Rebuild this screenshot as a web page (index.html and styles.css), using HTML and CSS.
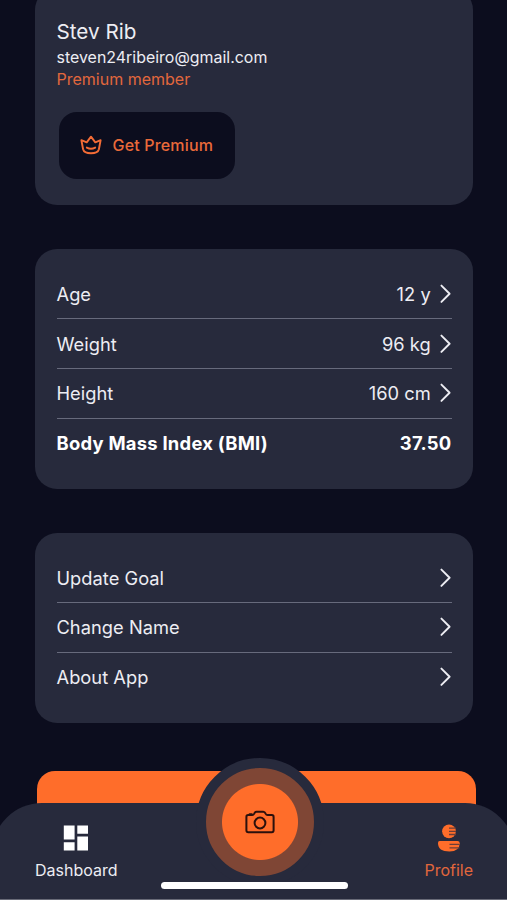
FILE: index.html
```html
<!DOCTYPE html>
<html lang="en">
<head>
<meta charset="utf-8">
<title>Profile</title>
<link rel="stylesheet" href="styles.css">
</head>
<body>
<div class="screen">
  <main class="content">
    <section class="card account">
      <h1 class="name"><span>Stev Rib</span></h1>
      <p class="email"><span>steven24ribeiro@gmail.com</span></p>
      <p class="member"><span>Premium member</span></p>
      <button class="premium">
        <svg class="crown" viewBox="0 0 22 20"><path d="M1.4 5.2L6.7 7.3L11 1.7L15.3 7.3L20.6 5.2L18.9 14.2Q17.9 18.2 11 18.2T3.1 14.2Z"/><path d="M6.8 12.6Q11 14.8 15.2 12.6"/></svg>
        <span>Get Premium</span>
      </button>
    </section>
    <section class="card list stats">
      <div class="row"><span>Age</span><span class="value">12 y</span><svg class="chevron" viewBox="0 0 12 20"><path d="M1.5 1.5L10 10L1.5 18.5"/></svg></div>
      <div class="row"><span>Weight</span><span class="value">96 kg</span><svg class="chevron" viewBox="0 0 12 20"><path d="M1.5 1.5L10 10L1.5 18.5"/></svg></div>
      <div class="row"><span>Height</span><span class="value">160 cm</span><svg class="chevron" viewBox="0 0 12 20"><path d="M1.5 1.5L10 10L1.5 18.5"/></svg></div>
      <div class="row total"><span>Body Mass Index (BMI)</span><span class="value">37.50</span></div>
    </section>
    <section class="card list actions">
      <div class="row"><span>Update Goal</span><svg class="chevron" viewBox="0 0 12 20"><path d="M1.5 1.5L10 10L1.5 18.5"/></svg></div>
      <div class="row"><span>Change Name</span><svg class="chevron" viewBox="0 0 12 20"><path d="M1.5 1.5L10 10L1.5 18.5"/></svg></div>
      <div class="row"><span>About App</span><svg class="chevron" viewBox="0 0 12 20"><path d="M1.5 1.5L10 10L1.5 18.5"/></svg></div>
    </section>
    <div class="cta"></div>
  </main>
  <nav class="tabs">
    <div class="tab dashboard">
      <svg class="grid-icon" viewBox="0 0 26 26"><path d="M.8.5h10.8v14H.8zM14.3.5H25v8.2H14.3zM.8 17.2h10.8v8.2H.8zM14.3 11.4H25v14H14.3z"/></svg>
      <span>Dashboard</span>
    </div>
    <div class="tab profile">
      <svg class="person-icon" viewBox="0 0 22 28"><circle cx="11" cy="7.3" r="6.9"/><path d="M1.5 17H19.5Q21.7 17 21.7 19.2Q21.7 27.5 11.5 27.5Q0 27.5 0 19Q0 17 1.5 17Z"/><path class="stripe" d="M11 4.1H18M11 7.3H18M11 10.5H18M11.5 20.3H21.5M11.5 23.8H21.5"/></svg>
      <span>Profile</span>
    </div>
    <button class="camera" aria-label="Camera">
      <svg viewBox="0 0 30 24"><path d="M3.2 5.1H7.2Q8.5 5.1 9.2 3.6Q10 1.7 11.5 1.7H18.3Q19.8 1.7 20.6 3.6Q21.3 5.1 22.6 5.1H26.8Q28.6 5.1 28.6 6.9V20.3Q28.6 22.2 26.8 22.2H3.2Q1.4 22.2 1.4 20.3V6.9Q1.4 5.1 3.2 5.1ZM4.6 4.2H6.8"/><circle cx="15" cy="13" r="5.4"/></svg>
    </button>
    <div class="home-bar"></div>
  </nav>
</div>
</body>
</html>
```

FILE: styles.css
```css
* { box-sizing: border-box; }
body { margin: 0; background: #0c0d1e; font-family: Inter, "Liberation Sans", sans-serif; color: #ededf3; }
h1, p { margin: 0; font-weight: 400; }
button { border: 0; margin: 0; padding: 0; font: inherit; }
svg { display: block; flex: none; }
.screen { position: relative; width: 507px; height: 900px; overflow: hidden; }
.content { padding: 0 34px 0 35px; margin-top: -12px; }
.card { width: 438px; background: #272a3c; border-radius: 22px; padding: 0 21.5px; }
.account { height: 217px; padding-top: 31px; }
.name { font-size: 20.7px; line-height: 26px; }
.email { font-size: 15.95px; line-height: 24px; padding-top: 1px; margin-bottom: -1px; }
.member { font-size: 16px; line-height: 20px; color: #e2673c; }
.premium { display: flex; align-items: center; gap: 10.5px; width: 176px; height: 67px; margin: 22.5px 0 0 2px; padding: 0 0 1px 21.5px; border-radius: 18px; background: #0c0d1e; color: #ea6a3a; font-size: 16px; font-weight: 500; letter-spacing: .17px; }
.crown { width: 22px; height: 20px; fill: none; stroke: #f46c36; stroke-width: 1.9; stroke-linejoin: round; stroke-linecap: round; }
.list { margin-top: 44px; }
.stats { height: 240px; padding-top: 20.7px; }
.actions { height: 190px; margin-top: 43.5px; padding-top: 20.7px; }
.row { display: flex; align-items: center; height: 49.7px; border-bottom: 1.5px solid #676a7c; font-size: 18.3px; letter-spacing: .02px; }
.row:last-child { border-bottom: 0; padding-bottom: 1px; }
.value { margin-left: auto; }
.chevron { width: 11.5px; height: 19.5px; margin: -.5px .3px 0 auto; fill: none; stroke: #ededf3; stroke-width: 2; stroke-linecap: round; stroke-linejoin: round; }
.value + .chevron { margin-left: 9px; }
.total { font-weight: 700; font-size: 18.4px; letter-spacing: .25px; color: #fff; }
.cta { width: 439px; height: 70px; margin: 48.5px 0 0 2px; border-radius: 18px; background: #ff6d2a; }
.tabs { position: absolute; left: -8px; right: -8px; bottom: 0; height: 97px; background: #272a3c; border-radius: 50px 50px 0 0; border-bottom: 1px solid #696b78; display: flex; justify-content: space-between; padding: 20px 42px 0 43px; }
.tab { position: relative; z-index: 1; display: flex; flex-direction: column; align-items: center; font-size: 16px; line-height: 20px; }
.profile { color: #e2673c; }
.grid-icon { width: 26px; height: 26px; margin: 2px 0 9px; fill: #fff; }
.person-icon { width: 22px; height: 28px; margin: 1px 0 8px; fill: #ff6d2a; }
.stripe { stroke: #6b3e38; stroke-width: 1.3; }
.camera { position: absolute; left: 204px; top: -45px; width: 128px; height: 128px; border-radius: 50%; border: 10px solid #272a3c; background: radial-gradient(circle, #ff6d2a 37.5px, #7f4635 38.5px); display: flex; align-items: center; justify-content: center; }
.camera svg { width: 30px; height: 24px; fill: none; stroke: #2b100c; stroke-width: 2; stroke-linejoin: round; stroke-linecap: round; }
.home-bar { position: absolute; left: 169px; top: 79px; width: 187px; height: 7px; border-radius: 4px; background: #fff; }
```
